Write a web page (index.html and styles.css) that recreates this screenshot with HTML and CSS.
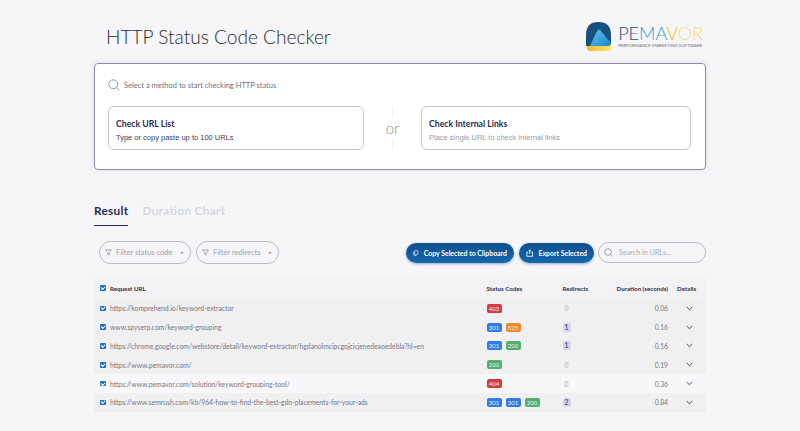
FILE: index.html
```html
<!DOCTYPE html>
<html lang="en">
<head>
<meta charset="utf-8">
<title>HTTP Status Code Checker</title>
<link rel="stylesheet" href="styles.css">
</head>
<body>
<div class="page">
  <header class="top">
    <h1>HTTP Status Code Checker</h1>
    <div class="logo">
      <svg class="mark" width="26" height="29" viewBox="0 0 26 29">
        <defs>
          <linearGradient id="lg1" x1="0" y1="0" x2="1" y2="1"><stop offset="0" stop-color="#5fc3e8"/><stop offset="1" stop-color="#1c87c9"/></linearGradient>
          <linearGradient id="lg2" x1="0" y1="0" x2="1" y2="0"><stop offset="0" stop-color="#f6b93b"/><stop offset="1" stop-color="#fbe26a"/></linearGradient>
        </defs>
        <path d="M0.500 24 Q0.500 29 4 29 L22 29 Q25 29 25 26 L25 20 Q25 24 22 24 Z" fill="url(#lg2)"/>
        <path d="M0 24 L0 13 Q0 0 12.500 0 Q25 0 25 13 L25 20 Q25 24 21 24 Z" fill="#17507f"/>
        <path d="M4 24 L11 9 Q13 6 15 9 L25 21 Q24.500 24 21 24 Z" fill="url(#lg1)"/>
      </svg>
      <div class="logo-text">
        <div class="wordmark"><span class="w1">PE</span><span class="w2">MA</span><span class="w3">V</span><span class="w4">OR</span></div>
        <div class="tagline">PERFORMANCE MARKETING SOFTWARE</div>
      </div>
    </div>
  </header>

  <section class="card">
    <div class="hint">
      <svg width="12" height="12" viewBox="0 0 12 12" fill="none" stroke="#8b8b9c" stroke-width="0.9"><circle cx="5.300" cy="5.300" r="4.500"/><path d="M8.600 8.600 L11.300 11.300"/></svg>
      <span>Select a method to start checking HTTP status</span>
    </div>
    <div class="methods">
      <div class="method method-a">
        <div class="m-title">Check URL List</div>
        <div class="m-sub">Type or copy paste up to 100 URLs</div>
      </div>
      <div class="or"><span>or</span></div>
      <div class="method method-b">
        <div class="m-title">Check Internal Links</div>
        <div class="m-sub muted">Place single URL to check internal links</div>
      </div>
    </div>
  </section>

  <nav class="tabs">
    <span class="tab active">Result</span>
    <span class="tab">Duration Chart</span>
  </nav>

  <div class="toolbar">
    <div class="pill filter">
      <svg width="7" height="7" viewBox="0 0 8 8" fill="none" stroke="#8b8b9c" stroke-width="0.8"><path d="M0.500 1 H7.500 L4.800 4.200 V7 L3.200 6 V4.200 Z"/></svg>
      <span>Filter status code</span><i class="caret"></i>
    </div>
    <div class="pill filter">
      <svg width="7" height="7" viewBox="0 0 8 8" fill="none" stroke="#8b8b9c" stroke-width="0.8"><path d="M0.500 1 H7.500 L4.800 4.200 V7 L3.200 6 V4.200 Z"/></svg>
      <span>Filter redirects</span><i class="caret"></i>
    </div>
    <div class="spacer"></div>
    <button class="action copy">
      <svg width="8" height="8" viewBox="0 0 8 8" fill="none" stroke="#fff" stroke-width="0.9"><rect x="2" y="0.500" width="5" height="5.500" rx="2"/><path d="M1 2 V6 Q1 7.500 3 7.500 H5"/></svg>
      Copy Selected to Clipboard
    </button>
    <button class="action export">
      <svg width="8" height="8" viewBox="0 0 8 8" fill="none" stroke="#fff" stroke-width="0.9"><path d="M2.500 3 H1 V7.500 H7 V3 H5.500 M4 5 V0.700 M2.800 1.800 L4 0.700 L5.200 1.800"/></svg>
      Export Selected
    </button>
    <div class="pill search">
      <svg width="9" height="9" viewBox="0 0 9 9" fill="none" stroke="#8b8b9c" stroke-width="0.8"><circle cx="4" cy="4" r="3.300"/><path d="M6.500 6.500 L8.500 8.500"/></svg>
      <span>Search in URLs...</span>
    </div>
  </div>

  <div class="table">
    <div class="row head">
      <div class="c-url"><i class="check"></i><span>Request URL</span></div>
      <div class="c-codes">Status Codes</div>
      <div class="c-red">Redirects</div>
      <div class="c-dur">Duration (seconds)</div>
      <div class="c-det">Details</div>
    </div>
    <div class="row shade">
      <div class="c-url"><i class="check"></i><span>https://komprehend.io/keyword-extractor</span></div>
      <div class="c-codes"><b class="code red">403</b></div>
      <div class="c-red"><span class="zero">0</span></div>
      <div class="c-dur">0.06</div>
      <div class="c-det"><svg class="chev" width="7" height="5" viewBox="0 0 7 5"><path d="M0.700 1 L3.500 3.700 L6.300 1"/></svg></div>
    </div>
    <div class="row shade">
      <div class="c-url"><i class="check"></i><span>www.spyserp.com/keyword-grouping</span></div>
      <div class="c-codes"><b class="code blue">301</b><b class="code orange">525</b></div>
      <div class="c-red"><span class="count">1</span></div>
      <div class="c-dur">0.16</div>
      <div class="c-det"><svg class="chev" width="7" height="5" viewBox="0 0 7 5"><path d="M0.700 1 L3.500 3.700 L6.300 1"/></svg></div>
    </div>
    <div class="row shade">
      <div class="c-url"><i class="check"></i><span>https://chrome.google.com/webstore/detail/keyword-extractor/hgdanolmcipcgojcicjenedeaoedebla?hl=en</span></div>
      <div class="c-codes"><b class="code blue">301</b><b class="code green">200</b></div>
      <div class="c-red"><span class="count">1</span></div>
      <div class="c-dur">0.16</div>
      <div class="c-det"><svg class="chev" width="7" height="5" viewBox="0 0 7 5"><path d="M0.700 1 L3.500 3.700 L6.300 1"/></svg></div>
    </div>
    <div class="row shade">
      <div class="c-url"><i class="check"></i><span>https://www.pemavor.com/</span></div>
      <div class="c-codes"><b class="code green">200</b></div>
      <div class="c-red"><span class="zero">0</span></div>
      <div class="c-dur">0.19</div>
      <div class="c-det"><svg class="chev" width="7" height="5" viewBox="0 0 7 5"><path d="M0.700 1 L3.500 3.700 L6.300 1"/></svg></div>
    </div>
    <div class="row">
      <div class="c-url"><i class="check"></i><span>https://www.pemavor.com/solution/keyword-grouping-tool/</span></div>
      <div class="c-codes"><b class="code red">404</b></div>
      <div class="c-red"><span class="zero">0</span></div>
      <div class="c-dur">0.36</div>
      <div class="c-det"><svg class="chev" width="7" height="5" viewBox="0 0 7 5"><path d="M0.700 1 L3.500 3.700 L6.300 1"/></svg></div>
    </div>
    <div class="row shade">
      <div class="c-url"><i class="check"></i><span>https://www.semrush.com/kb/964-how-to-find-the-best-gdn-placements-for-your-ads</span></div>
      <div class="c-codes"><b class="code blue">301</b><b class="code blue">301</b><b class="code green">200</b></div>
      <div class="c-red"><span class="count">2</span></div>
      <div class="c-dur">0.84</div>
      <div class="c-det"><svg class="chev" width="7" height="5" viewBox="0 0 7 5"><path d="M0.700 1 L3.500 3.700 L6.300 1"/></svg></div>
    </div>
  </div>
</div>
</body>
</html>
```
FILE: styles.css
```css
* { box-sizing: border-box; }
html, body { margin: 0; padding: 0; }
body {
  background: #f6f6f8;
  font-family: Lato, "Noto Sans", sans-serif;
  color: #2e2b52;
  height: 431px;
  overflow: hidden;
}
.page { width: 612px; margin-left: 94px; }

.top { display: flex; justify-content: space-between; height: 63px; padding-left: 12px; }
h1 {
  margin: 26px 0 0;
  font-size: 19.100px;
  line-height: 22px;
  font-weight: 300;
  color: #2c2c36;
  letter-spacing: 0;
}
.logo { display: flex; gap: 6px; margin: 22px 3px 0 0; height: 29px; }
.mark { display: block; }
.logo-text { display: flex; flex-direction: column; padding-top: 3px; }
.wordmark { font-size: 18px; line-height: 17px; font-weight: 300; letter-spacing: 0; white-space: nowrap; }
.w1 { color: #17507f; }
.w2 { color: #2b9fd9; }
.w3 { color: #f2b632; }
.w4 { color: #f5dc78; }
.tagline { font-size: 4.400px; line-height: 6px; margin-top: 1px; color: #6c6c78; white-space: nowrap; }

.card {
  height: 107px;
  background: #fff;
  border: 1px solid #8d8bab;
  border-radius: 4px;
  box-shadow: 0 0 5px rgba(60, 60, 110, 0.12);
  padding: 15px 13px 0;
}
.hint { display: flex; align-items: center; gap: 4px; height: 12px; font-size: 7.500px; color: #6f6f80; }
.methods { display: flex; align-items: stretch; margin-top: 15px; }
.method {
  height: 44px;
  border: 1px solid #c4c4cc;
  border-radius: 6px;
  padding: 11px 7px 0;
  background: #fff;
}
.method-a { width: 256px; }
.method-b { width: 270px; }
.m-title { font-size: 8.700px; line-height: 12px; font-weight: 700; color: #2e2b52; }
.m-sub { font-family: "Liberation Sans", sans-serif; font-size: 7.500px; line-height: 10px; margin-top: 3px; color: #3c3c60; }
.m-sub.muted { color: #9a9aa4; }
.or {
  width: 57px;
  display: flex;
  flex-direction: column;
  align-items: center;
  font-size: 15px;
  line-height: 20px;
  font-weight: 300;
  color: #8f8f99;
}
.or::before, .or::after { content: ""; flex: 1; width: 1px; background: #f0f0f2; margin: 1px 0; }

.tabs { display: flex; gap: 14px; margin-top: 33px; height: 23px; }
.tab { font-size: 11.800px; line-height: 16px; font-weight: 700; color: #d5d5df; height: 23px; letter-spacing: 0.300px; }
.tab.active { color: #2e2b52; border-bottom: 1px solid #2e2b52; }

.toolbar { display: flex; align-items: center; gap: 5px; height: 23px; margin-top: 15px; padding: 0 0 0 5px; }
.pill {
  display: flex;
  align-items: center;
  height: 23px;
  border: 1px solid #b9b9c8;
  border-radius: 12px;
  font-size: 7.500px;
  color: #9d9dad;
}
.filter { gap: 4px; padding: 0 5px; }
.filter:nth-child(1) { width: 92px; }
.filter:nth-child(2) { width: 83px; }
.caret { width: 0; height: 0; border: 2px solid transparent; border-top-color: #9d9dad; border-bottom: 0; margin-left: 3px; }
.spacer { flex: 1; }
.action {
  display: flex;
  align-items: center;
  gap: 5px;
  height: 20px;
  border: 0;
  border-radius: 10px;
  background: linear-gradient(180deg, #0f4f8c, #1468ae);
  box-shadow: 0 1px 3px rgba(20, 60, 120, 0.4);
  color: #fff;
  font-family: Lato, sans-serif;
  font-size: 6.900px;
  font-weight: 700;
  padding: 0 7px;
  white-space: nowrap;
}
.copy { width: 108px; }
.export { width: 75px; margin-right: -1px; }
.search { width: 108px; height: 21px; gap: 6px; padding-left: 5px; font-size: 7.200px; color: #a8a8b6; }

.table { margin-top: 13px; width: 612px; font-size: 6.780px; color: #77777f; }
.row { display: flex; align-items: center; height: 18.800px; background: #f8f8fa; padding-left: 6px; }
.row.shade { background: #f0f0f2; }
.row.head { height: 22px; background: #f2f2f5; font-size: 6.200px; font-weight: 700; color: #33333f; }
.c-url { width: 386.500px; display: flex; align-items: center; gap: 4.500px; white-space: nowrap; }
.c-codes { width: 76px; display: flex; gap: 4px; }
.c-red { width: 39.500px; }
.c-dur { width: 66px; text-align: right; }
.c-det { width: 30px; padding-left: 17.500px; display: flex; }
.head .c-det { padding-left: 9px; }
.check {
  width: 5.500px;
  height: 5.500px;
  flex: none;
  border-radius: 1px;
  background: #1e6fc4;
  position: relative;
}
.check::after {
  content: "";
  position: absolute;
  left: 1.300px;
  top: 0.700px;
  width: 3px;
  height: 1.800px;
  border-left: 1px solid #fff;
  border-bottom: 1px solid #fff;
  transform: rotate(-45deg);
}
.code {
  display: block;
  width: 15px;
  height: 9px;
  line-height: 9px;
  text-align: center;
  border-radius: 2px;
  color: #e8eef8;
  font-weight: 400;
  font-size: 6px;
}
.red { background: #d83a3a; }
.blue { background: #2f7de1; }
.orange { background: #f0882a; }
.green { background: #57ad6f; }
.zero { display: block; width: 8px; text-align: center; color: #b0b0ba; }
.count { display: block; width: 8px; height: 9px; line-height: 9px; text-align: center; border-radius: 2px; background: #d5d2ea; color: #5a5690; font-weight: 700; }
.chev { fill: none; stroke: #3a3a52; stroke-width: 0.900; }
```
